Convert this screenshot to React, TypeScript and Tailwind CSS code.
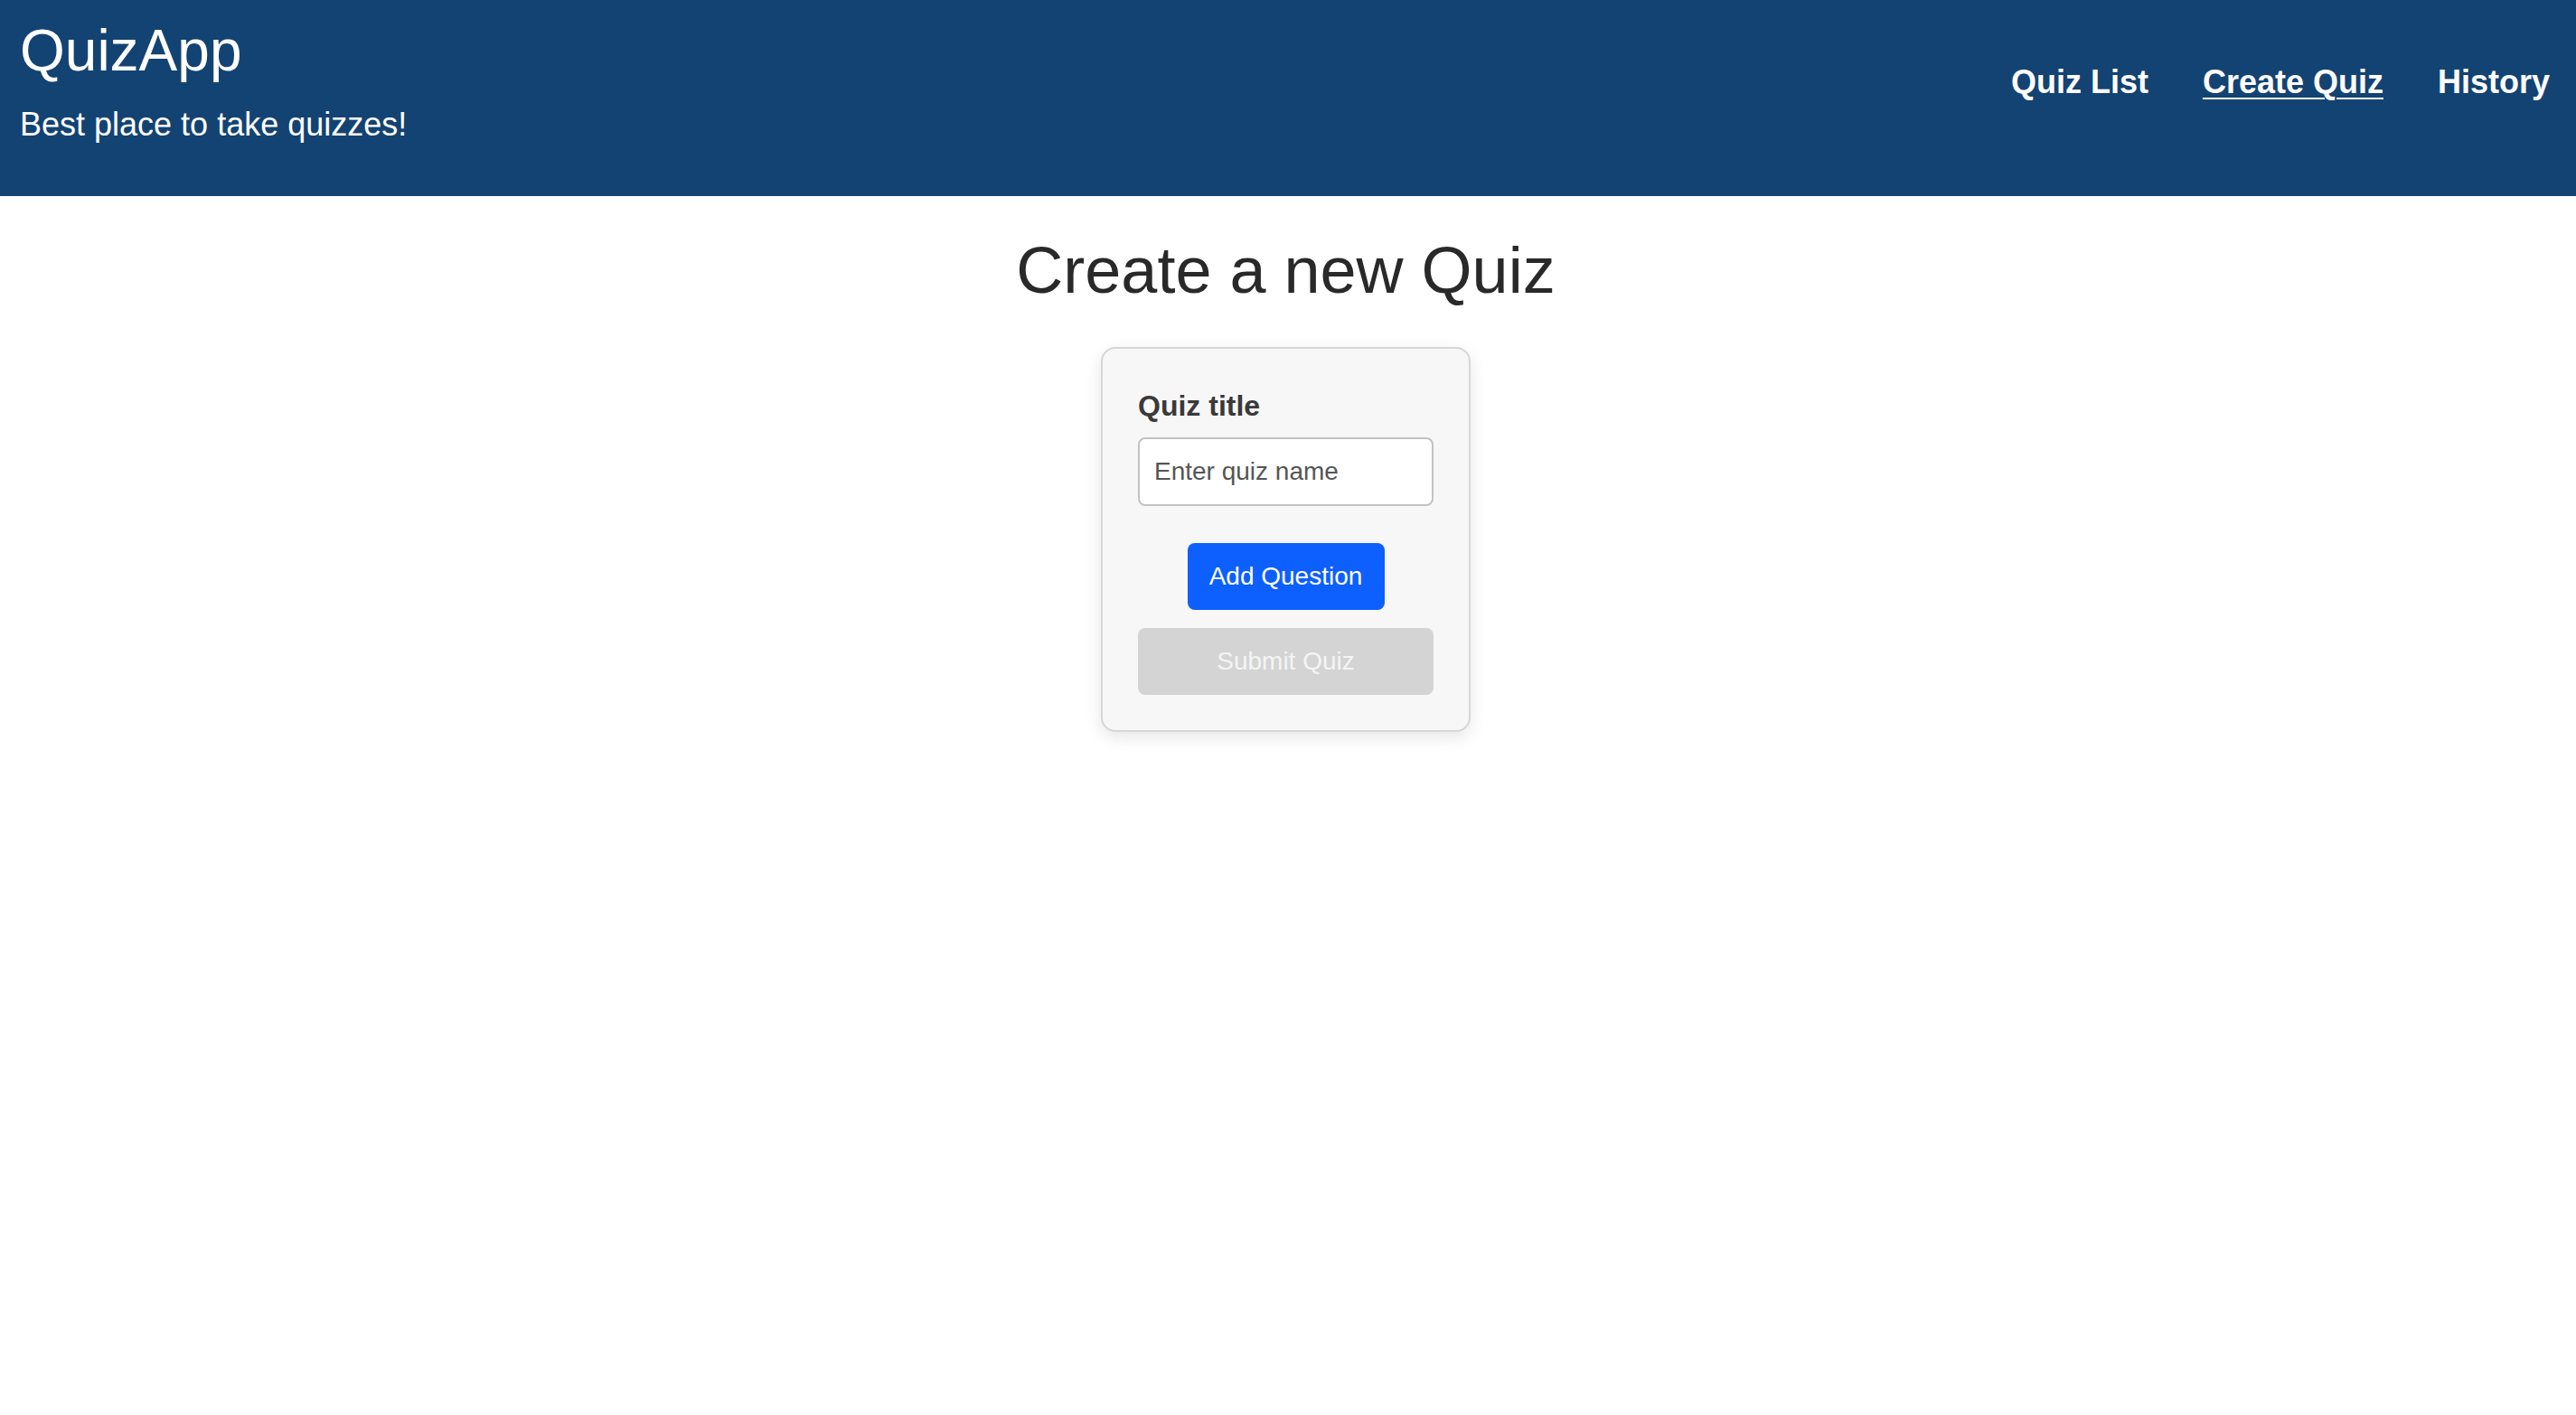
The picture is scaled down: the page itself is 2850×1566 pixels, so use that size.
import React from "react";

export default function App() {
  return (
    <div className="min-h-screen bg-white" style={{ fontFamily: '"Liberation Sans", Arial, sans-serif' }}>
      <header className="flex items-start justify-between bg-[#134372] pl-[22px] pr-[29px] pt-[24px] pb-[61px] text-white">
        <div className="flex flex-col gap-[32px]">
          <h1 className="text-[64px] leading-[64px] font-normal">QuizApp</h1>
          <p className="text-[36px] leading-[36px]">Best place to take quizzes!</p>
        </div>
        <nav className="mt-[49px] flex gap-[60px] text-[36px] font-bold leading-[36px]">
          <a href="#" className="text-white">Quiz List</a>
          <a href="#" className="text-white underline decoration-2 underline-offset-[5px]">Create Quiz</a>
          <a href="#" className="text-white">History</a>
        </nav>
      </header>
      <main className="flex flex-col items-center pr-[5px]">
        <h2 className="mt-[46px] text-[72px] leading-[72px] text-[#292929]">Create a new Quiz</h2>
        <div className="mt-[49px] w-[409px] rounded-[16px] border-2 border-[#d6d6d6] bg-[#f7f7f7] px-[39px] pt-[45px] pb-[39px] shadow-[0_6px_18px_rgba(0,0,0,0.10)]">
          <label className="block text-[32px] font-bold leading-[36px] text-[#3a3a3a]">Quiz title</label>
          <input
            type="text"
            placeholder="Enter quiz name"
            className="mt-[17px] block h-[76px] w-full rounded-[8px] border-2 border-[#c2c2c2] bg-white px-[16px] text-[28px] text-[#333] outline-none placeholder:text-[#555]"
          />
          <div className="mt-[41px] flex justify-center">
            <button className="h-[74px] w-[218px] rounded-[8px] bg-[#0d5ffe] text-[28px] text-white">Add Question</button>
          </div>
          <button disabled className="mt-[20px] block h-[74px] w-full rounded-[8px] bg-[#d4d4d4] text-[28px] text-[#f4f4f4]">Submit Quiz</button>
        </div>
      </main>
    </div>
  );
}
